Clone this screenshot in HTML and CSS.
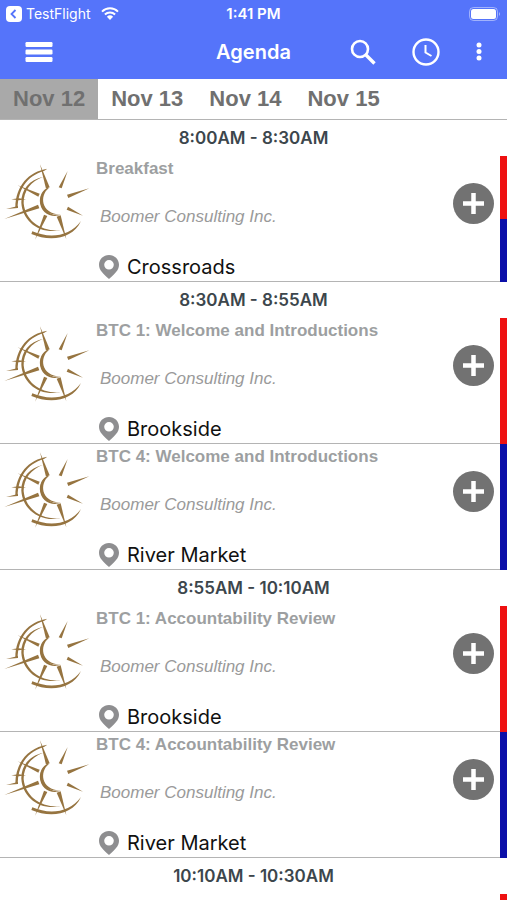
FILE: index.html
```html
<!DOCTYPE html>
<html lang="en">
<head>
    <meta charset="UTF-8">
    <meta name="viewport" content="width=device-width, initial-scale=1.0">
    <title>Agenda</title>
    <link rel="stylesheet" href="styles.css">
</head>
<body>
    <!-- Shared icons -->
    <svg class="icon-sprite" aria-hidden="true">
        <symbol id="logo" viewBox="0 3 288 282">
            <g fill="#967440">
                <path d="M120 28 L149 97 L138 101 Z"/>
                <path d="M203 48 L185 100 L176 97 Z"/>
                <path d="M268 100 L205 129 L201 119 Z"/>
                <path d="M249 182 L200 164 L204 155 Z"/>
                <path d="M199 253 L170 185 L182 181 Z"/>
                <path d="M105 254 L132 179 L142 183 Z"/>
                <path d="M13 192 L114 149 L118 160 Z"/>
                <path d="M53 91 L119 116 L115 125 Z"/>
                <path d="M146 98 A44 44 0 0 0 182 179 A45 45 0 0 1 146 98 Z"/>
                <path d="M144 98 C108 110 108 184 182 179 C121 176 119 121 146 100 Z"/>
                <path d="M130 65 C88 74 63 104 64 143 C67 196 116 239 182 226 C122 231 76 196 71 145 C70 108 93 78 130 65 Z"/>
                <path d="M142 41 C86 50 47 92 46 157 L53 159 C54 104 80 63 132 48 Z"/>
                <path d="M97 229 C148 251 208 246 243 198 C218 253 150 261 94 237 Z"/>
                <path d="M34 133 L56 130 L78 133 L56 136 Z"/>
                <path d="M18 162 L54 153 L54 159 Z"/>
            </g>
        </symbol>
        <symbol id="pin" viewBox="0 0 20 24">
            <path fill="#8e8e90" fill-rule="evenodd" d="M10 0 C4.400 0 0 4.300 0 9.800 C0 15.500 4.500 19 10 24 C15.500 19 20 15.500 20 9.800 C20 4.300 15.600 0 10 0 Z M10 5 A4.800 4.800 0 1 1 10 14.600 A4.800 4.800 0 1 1 10 5 Z"/>
        </symbol>
        <symbol id="plus" viewBox="0 0 41 41">
            <circle cx="20.500" cy="20.500" r="20.500" fill="#727272"/>
            <path d="M20.500 10 V31 M10 20.500 H31" stroke="#fff" stroke-width="4.500"/>
        </symbol>
    </svg>

    <div class="app">
        <header class="header">
            <div class="status-bar">
                <div class="status-left">
                    <a class="back-link" href="#">
                        <svg width="16" height="16" viewBox="0 0 16 16" aria-hidden="true">
                            <rect width="16" height="16" rx="4" fill="#fff"/>
                            <path d="M9.500 4 L5.500 8 L9.500 12" fill="none" stroke="#5574fa" stroke-width="1.800"/>
                        </svg>
                        <span>TestFlight</span>
                    </a>
                    <svg width="18" height="13" viewBox="0 0 18 13" aria-hidden="true">
                        <path d="M1 4.600 A11.400 11.400 0 0 1 17 4.600 M3.900 7.500 A7.400 7.400 0 0 1 14.100 7.500" fill="none" stroke="#fff" stroke-width="2"/>
                        <path d="M9 13 L5.900 9.700 A4.500 4.500 0 0 1 12.100 9.700 Z" fill="#fff"/>
                    </svg>
                </div>
                <span class="clock">1:41 PM</span>
                <svg class="battery" width="32" height="14" viewBox="0 0 32 14" aria-hidden="true">
                    <rect x="0.500" y="0.500" width="28" height="13" rx="4" fill="none" stroke="#fff" stroke-opacity="0.450"/>
                    <rect x="2" y="2" width="25" height="10" rx="2.500" fill="#fff"/>
                    <path d="M30 5 A2.500 2.500 0 0 1 30 9 Z" fill="#fff" fill-opacity="0.500"/>
                </svg>
            </div>
            <div class="nav-bar">
                <div class="nav-side">
                    <button class="icon-button" aria-label="Menu">
                        <svg width="28" height="20" viewBox="0 0 28 20">
                            <g fill="#fff">
                                <rect x="0.500" width="27" height="5" rx="1.200"/>
                                <rect x="0.500" y="7.500" width="27" height="5" rx="1.200"/>
                                <rect x="0.500" y="15" width="27" height="5" rx="1.200"/>
                            </g>
                        </svg>
                    </button>
                </div>
                <h1 class="nav-title">Agenda</h1>
                <div class="nav-side nav-actions">
                    <button class="icon-button" aria-label="Search">
                        <svg width="26" height="26" viewBox="0 0 26 26" fill="none" stroke="#fff">
                            <circle cx="10" cy="10" r="8" stroke-width="2.600"/>
                            <path d="M16 16 L24.500 24.500" stroke-width="3.400"/>
                        </svg>
                    </button>
                    <button class="icon-button" aria-label="Now">
                        <svg width="28" height="28" viewBox="0 0 28 28" fill="none" stroke="#fff">
                            <circle cx="14" cy="14" r="12.500" stroke-width="2.400"/>
                            <path d="M13.500 7 V14.500 L19.500 18" stroke-width="2"/>
                        </svg>
                    </button>
                    <button class="icon-button" aria-label="More">
                        <svg width="6" height="20" viewBox="0 0 6 20" fill="#fff">
                            <circle cx="3" cy="3" r="2.500"/>
                            <circle cx="3" cy="9.500" r="2.500"/>
                            <circle cx="3" cy="16" r="2.500"/>
                        </svg>
                    </button>
                </div>
            </div>
        </header>

        <nav class="days">
            <button class="day active">Nov 12</button>
            <button class="day">Nov 13</button>
            <button class="day">Nov 14</button>
            <button class="day">Nov 15</button>
        </nav>

        <main class="agenda">
            <h2 class="time">8:00AM - 8:30AM</h2>
            <article class="session">
                <div class="session-body">
                    <svg class="logo" aria-hidden="true"><use href="#logo"/></svg>
                    <div class="details">
                        <h3 class="session-title">Breakfast</h3>
                        <p class="company">Boomer Consulting Inc.</p>
                        <p class="location"><svg class="pin" aria-hidden="true"><use href="#pin"/></svg>Crossroads</p>
                    </div>
                    <button class="add" aria-label="Add to schedule"><svg><use href="#plus"/></svg></button>
                </div>
                <div class="tracks"><span class="track red"></span><span class="track blue"></span></div>
            </article>

            <h2 class="time">8:30AM - 8:55AM</h2>
            <article class="session">
                <div class="session-body">
                    <svg class="logo" aria-hidden="true"><use href="#logo"/></svg>
                    <div class="details">
                        <h3 class="session-title">BTC 1: Welcome and Introductions</h3>
                        <p class="company">Boomer Consulting Inc.</p>
                        <p class="location"><svg class="pin" aria-hidden="true"><use href="#pin"/></svg>Brookside</p>
                    </div>
                    <button class="add" aria-label="Add to schedule"><svg><use href="#plus"/></svg></button>
                </div>
                <div class="tracks"><span class="track red"></span></div>
            </article>
            <article class="session">
                <div class="session-body">
                    <svg class="logo" aria-hidden="true"><use href="#logo"/></svg>
                    <div class="details">
                        <h3 class="session-title">BTC 4: Welcome and Introductions</h3>
                        <p class="company">Boomer Consulting Inc.</p>
                        <p class="location"><svg class="pin" aria-hidden="true"><use href="#pin"/></svg>River Market</p>
                    </div>
                    <button class="add" aria-label="Add to schedule"><svg><use href="#plus"/></svg></button>
                </div>
                <div class="tracks"><span class="track blue"></span></div>
            </article>

            <h2 class="time">8:55AM - 10:10AM</h2>
            <article class="session">
                <div class="session-body">
                    <svg class="logo" aria-hidden="true"><use href="#logo"/></svg>
                    <div class="details">
                        <h3 class="session-title">BTC 1: Accountability Review</h3>
                        <p class="company">Boomer Consulting Inc.</p>
                        <p class="location"><svg class="pin" aria-hidden="true"><use href="#pin"/></svg>Brookside</p>
                    </div>
                    <button class="add" aria-label="Add to schedule"><svg><use href="#plus"/></svg></button>
                </div>
                <div class="tracks"><span class="track red"></span></div>
            </article>
            <article class="session">
                <div class="session-body">
                    <svg class="logo" aria-hidden="true"><use href="#logo"/></svg>
                    <div class="details">
                        <h3 class="session-title">BTC 4: Accountability Review</h3>
                        <p class="company">Boomer Consulting Inc.</p>
                        <p class="location"><svg class="pin" aria-hidden="true"><use href="#pin"/></svg>River Market</p>
                    </div>
                    <button class="add" aria-label="Add to schedule"><svg><use href="#plus"/></svg></button>
                </div>
                <div class="tracks"><span class="track blue"></span></div>
            </article>

            <h2 class="time">10:10AM - 10:30AM</h2>
            <article class="session">
                <div class="session-body"></div>
                <div class="tracks"><span class="track red"></span></div>
            </article>
        </main>
    </div>
</body>
</html>
```

FILE: styles.css
```css
* {
    margin: 0;
    padding: 0;
    box-sizing: border-box;
}

body {
    font-family: Inter, "Liberation Sans", sans-serif;
    background: #fff;
    color: #111;
}

button {
    border: none;
    background: none;
    font: inherit;
    color: inherit;
    cursor: pointer;
}

svg {
    display: block;
    flex: none;
}

.icon-sprite {
    display: none;
}

.app {
    height: 100vh;
    display: flex;
    flex-direction: column;
    overflow: hidden;
}

/* Header */
.header {
    flex: none;
    background: #5574fa;
    color: #fff;
}

.status-bar {
    display: grid;
    grid-template-columns: 1fr auto 1fr;
    align-items: center;
    height: 27px;
    padding: 0 6px;
    font-size: 14px;
}

.status-left {
    display: flex;
    align-items: center;
    gap: 10px;
}

.back-link {
    display: flex;
    align-items: center;
    gap: 4px;
    color: inherit;
    text-decoration: none;
}

.clock {
    font-size: 15px;
    font-weight: 600;
}

.battery {
    justify-self: end;
}

.nav-bar {
    display: flex;
    align-items: center;
    height: 52px;
    padding: 0 25px 2px;
}

.nav-side {
    flex: 1;
    display: flex;
    align-items: center;
}

.nav-actions {
    justify-content: flex-end;
    gap: 36px;
}

.nav-title {
    font-size: 20px;
    font-weight: 600;
}

.icon-button {
    display: flex;
}

/* Day tabs */
.days {
    flex: none;
    display: flex;
    height: 41px;
    border-bottom: 1px solid #b4b4b4;
}

.day {
    padding: 0 13px;
    font-family: "Liberation Sans", Arial, sans-serif;
    font-size: 22px;
    font-weight: 700;
    color: #707070;
}

.day.active {
    background: #a9a9a9;
}

/* Agenda list */
.agenda {
    flex: 1;
    min-height: 0;
    overflow-y: auto;
    scrollbar-width: none;
}

.time {
    height: 36px;
    line-height: 36px;
    text-align: center;
    font-size: 17px;
    font-weight: 600;
    color: #3c464c;
}

.session {
    display: flex;
    height: 126px;
}

.session-body {
    flex: 1;
    display: flex;
    min-width: 0;
    border-bottom: 1px solid #b4b4b4;
}

.logo {
    width: 96px;
    height: 94px;
}

.details {
    flex: 1;
    display: flex;
    flex-direction: column;
    min-width: 0;
    font-family: "Liberation Sans", Arial, sans-serif;
}

.session-title {
    line-height: 26px;
    font-size: 17px;
    font-weight: 700;
    color: #9d9fa1;
}

.company {
    line-height: 70px;
    padding-left: 4px;
    font-size: 17px;
    font-style: italic;
    color: #9a9a9a;
}

.location {
    display: flex;
    align-items: center;
    gap: 8px;
    height: 30px;
    padding-left: 3px;
    font-family: Inter, "Liberation Sans", sans-serif;
    font-size: 20px;
}

.pin {
    width: 20px;
    height: 24px;
}

.add {
    display: flex;
    align-items: center;
    height: 94px;
    padding: 0 6px;
}

.add svg {
    width: 41px;
    height: 41px;
}

.tracks {
    display: flex;
    flex-direction: column;
    width: 7px;
}

.track {
    flex: 1;
}

.red {
    background: #ee1111;
}

.blue {
    background: #0b0fa8;
}
```
